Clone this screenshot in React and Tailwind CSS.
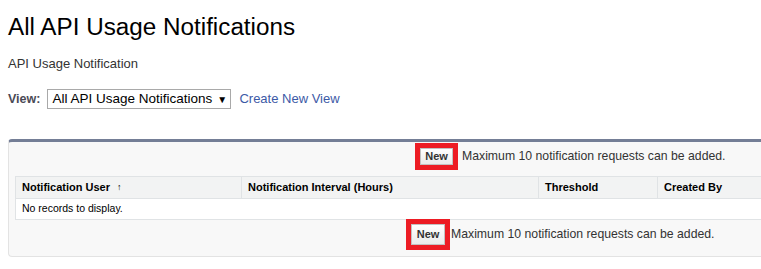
export default function App() {
  const font = { fontFamily: '"Liberation Sans", Arial, sans-serif' };
  return (
    <div className="w-[761px] h-[269px] overflow-hidden bg-white text-[#222]" style={font}>
      <div className="pl-[8px] pt-[12px]">
        <h1 className="text-[24.25px] leading-[30px] text-black">All API Usage Notifications</h1>
        <div className="mt-[14px] text-[13px] leading-[16px] text-[#333]">API Usage Notification</div>
        <div className="mt-[17px] flex items-center h-[20px]">
          <span className="text-[12.5px] font-bold text-[#4a4a56]">View:</span>
          <div className="ml-[7px] flex h-[20px] w-[184px] items-center whitespace-nowrap border border-[#a9a9a9] bg-white pl-[4px] text-[13.5px] text-black">
            <span>All API Usage Notifications</span>
            <span className="ml-[5px] text-[10px]">▼</span>
          </div>
          <a className="ml-[8px] text-[13px] text-[#3c5aa6]">Create New View</a>
        </div>
      </div>
      <div className="ml-[8px] mt-[30px] w-[900px] h-[118px] rounded-tl-[4px] rounded-bl-[4px] border-t-[3px] border-t-[#747e96] border-l border-b border-[#e3e3e3] bg-[#f8f8f8]">
        <div className="flex items-start pl-[406px] pt-[1px] h-[34px]">
          <div className="border-[5px] border-[#ed1c24]">
            <div className="flex h-[17px] w-[33px] items-center justify-center border border-[#c2c2c2] bg-gradient-to-b from-[#ffffff] to-[#ebebeb] text-[11px] font-bold text-[#333]">
              New
            </div>
          </div>
          <span className="ml-[4px] mt-[6px] text-[12.25px] leading-[15px] text-[#333]">Maximum 10 notification requests can be added.</span>
        </div>
        <div className="ml-[6px] w-[880px] bg-white">
          <div className="flex h-[23px] items-center border-y border-[#e0e3e5] border-l bg-[#f2f3f3] text-[11px] font-bold text-[#000]">
            <div className="w-[226px] pl-[6px] flex items-center h-full border-r border-[#e0e3e5]">Notification User <span className="ml-[7px] text-[9px] font-normal">↑</span></div>
            <div className="w-[297px] pl-[6px] flex items-center h-full border-r border-[#e0e3e5]">Notification Interval (Hours)</div>
            <div className="w-[119px] pl-[6px] flex items-center h-full border-r border-[#e0e3e5]">Threshold</div>
            <div className="pl-[6px] flex items-center h-full">Created By</div>
          </div>
          <div className="flex h-[21px] items-center border-b border-l border-[#e0e3e5] pl-[6px] text-[10.5px] text-black">No records to display.</div>
        </div>
        <div className="flex items-start pl-[397px] -mt-[1px]">
          <div className="border-[5px] border-[#ed1c24]">
            <div className="flex h-[21px] w-[34px] items-center justify-center border border-[#c2c2c2] bg-gradient-to-b from-[#ffffff] to-[#ebebeb] text-[11px] font-bold text-[#333]">
              New
            </div>
          </div>
          <span className="ml-[1px] mt-[8px] text-[12.25px] leading-[15px] text-[#333]">Maximum 10 notification requests can be added.</span>
        </div>
      </div>
    </div>
  );
}
